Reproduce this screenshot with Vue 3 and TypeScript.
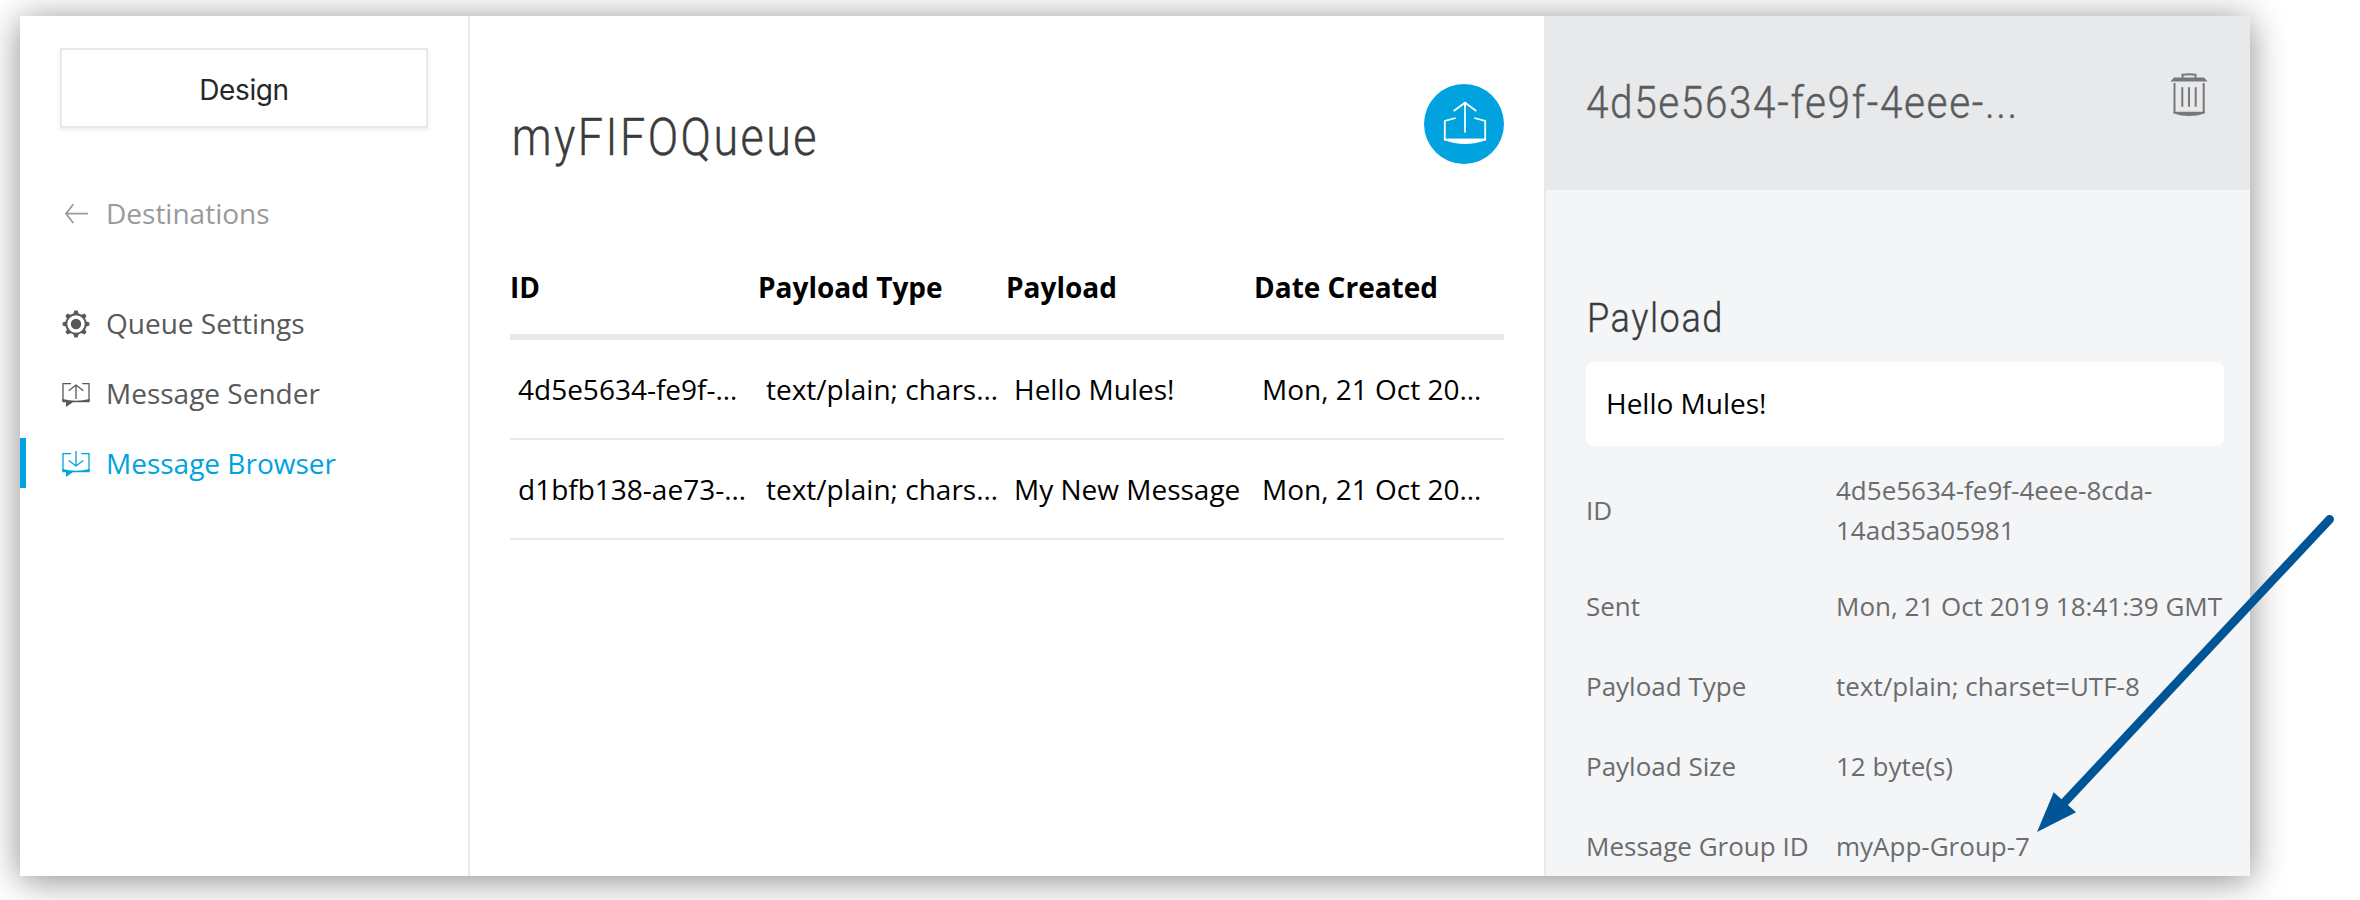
<script setup lang="ts">
interface Message {
  id: string
  type: string
  payload: string
  created: string
}

interface Detail {
  label: string
  lines: string[]
}

const columns: string[] = ['ID', 'Payload Type', 'Payload', 'Date Created']

const messages: Message[] = [
  { id: '4d5e5634-fe9f-…', type: 'text/plain; chars…', payload: 'Hello Mules!', created: 'Mon, 21 Oct 20…' },
  { id: 'd1bfb138-ae73-…', type: 'text/plain; chars…', payload: 'My New Message', created: 'Mon, 21 Oct 20…' },
]

const details: Detail[] = [
  { label: 'ID', lines: ['4d5e5634-fe9f-4eee-8cda-', '14ad35a05981'] },
  { label: 'Sent', lines: ['Mon, 21 Oct 2019 18:41:39 GMT'] },
  { label: 'Payload Type', lines: ['text/plain; charset=UTF-8'] },
  { label: 'Payload Size', lines: ['12 byte(s)'] },
  { label: 'Message Group ID', lines: ['myApp-Group-7'] },
]

const teeth: number[] = [0, 45, 90, 135, 180, 225, 270, 315]
</script>

<template>
  <div class="page">
    <div class="window">
      <aside class="sidebar">
        <button class="env">Design</button>
        <a class="nav-item back">
          <svg class="nav-icon" viewBox="0 0 28 28" fill="none" stroke="currentColor" stroke-width="1.8">
            <path d="M26 14.7H4M11.3 5.3L4 14.7l7.3 9.3" />
          </svg>
          <span>Destinations</span>
        </a>
        <nav class="nav">
          <a class="nav-item">
            <svg class="nav-icon" viewBox="0 0 28 28" fill="none" stroke="currentColor">
              <circle cx="14" cy="15" r="9.7" stroke-width="2" />
              <circle cx="14" cy="15" r="5.2" fill="currentColor" stroke="none" />
              <path
                v-for="angle in teeth"
                :key="angle"
                d="M11.2 5.6L12.4 1.6H15.6L16.8 5.6z"
                fill="currentColor"
                stroke="none"
                :transform="`rotate(${angle} 14 15)`"
              />
            </svg>
            <span>Queue Settings</span>
          </a>
          <a class="nav-item">
            <svg class="nav-icon" viewBox="0 0 28 28" fill="none" stroke="currentColor" stroke-width="1.3">
              <path d="M9 4.6H1V22M20.3 4.6H27V22" />
              <path d="M.4 20Q14 23.6 27.6 20V23.3H10.8L4 28V23.3H.4z" fill="currentColor" stroke="none" />
              <path d="M14 6V20M6.7 11.7L14 6l7.3 5.7" />
            </svg>
            <span>Message Sender</span>
          </a>
          <a class="nav-item active">
            <svg class="nav-icon" viewBox="0 0 28 28" fill="none" stroke="currentColor" stroke-width="1.3">
              <path d="M9 4.6H1V22M19.3 4.6H27V22" />
              <path d="M.4 20Q14 23.6 27.6 20V23.3H10.8L4 28V23.3H.4z" fill="currentColor" stroke="none" />
              <path d="M14 2V16.8M6.7 11.5L14 17l7.3-5.5" />
            </svg>
            <span>Message Browser</span>
          </a>
        </nav>
      </aside>

      <main class="main">
        <header class="main-head">
          <h1><span class="din queue-name">myFIFOQueue</span></h1>
          <button class="send">
            <svg viewBox="0 0 80 80" fill="none" stroke="#fff" stroke-width="1.8">
              <path d="M41 18.8V48.6M29.7 27L41 18.7 52.3 27" />
              <path d="M31.7 34L20.8 37V55.6H61.2V37L50.3 34" />
              <path d="M20 54.8H62V56Q52 60 41 60T20 56z" fill="#fff" stroke="none" />
            </svg>
          </button>
        </header>
        <div class="table">
          <div class="row head">
            <div v-for="column in columns" :key="column">{{ column }}</div>
          </div>
          <div v-for="message in messages" :key="message.id" class="row">
            <div>{{ message.id }}</div>
            <div>{{ message.type }}</div>
            <div>{{ message.payload }}</div>
            <div>{{ message.created }}</div>
          </div>
        </div>
      </main>

      <section class="panel">
        <header class="panel-head">
          <h2><span class="din message-name">4d5e5634-fe9f-4eee-...</span></h2>
          <svg class="trash" viewBox="0 0 38 44" fill="none" stroke="currentColor" stroke-width="2">
            <path d="M12.5 5V1.7Q19 .6 25.5 1.7V5" />
            <path d="M.4 8.4L4 4.6H34L37.6 8.4z" fill="currentColor" stroke="none" />
            <path d="M4.5 10V40M33.7 10V40M12.3 14.3V33.7M19 14.3V33.7M25.7 14.3V33.7" />
            <path d="M3.5 38.8H34.7V40.5Q27 43 19 43T3.5 40.5z" fill="currentColor" stroke="none" />
          </svg>
        </header>
        <div class="panel-body">
          <h3><span class="din payload-name">Payload</span></h3>
          <div class="payload">Hello Mules!</div>
          <dl class="details">
            <div v-for="detail in details" :key="detail.label" class="detail">
              <dt>{{ detail.label }}</dt>
              <dd>
                <div v-for="line in detail.lines" :key="line">{{ line }}</div>
              </dd>
            </div>
          </dl>
        </div>
      </section>
    </div>

    <svg class="pointer" viewBox="0 0 2360 900">
      <path d="M2329.7 519.3L2062 805" stroke="#005596" stroke-width="8.6" stroke-linecap="round" />
      <path d="M2037 832L2053.7 792.3L2076 812.3z" fill="#005596" />
    </svg>
  </div>
</template>

<style>
body {
  margin: 0;
  background: #fff;
}
</style>

<style scoped>
.page {
  position: relative;
  box-sizing: border-box;
  width: 2360px;
  height: 900px;
  padding: 16px 0 0 20px;
  overflow: hidden;
  background: #fff;
  font-family: "Open Sans", "Noto Sans", sans-serif;
  font-size: 28px;
  color: #000;
}
.window {
  display: flex;
  width: 2230px;
  height: 860px;
  background: #fff;
  box-shadow: 0 4px 34px rgba(0, 0, 0, 0.46);
}
.sidebar {
  box-sizing: border-box;
  width: 450px;
  padding-top: 32px;
  border-right: 2px solid #e8e9ea;
}
.env {
  display: block;
  box-sizing: border-box;
  width: 368px;
  height: 80px;
  margin: 0 0 60px 40px;
  padding: 3px 0 0;
  border: 2px solid #e8e9ea;
  background: #fff;
  box-shadow: 0 2px 4px rgba(0, 0, 0, 0.08);
  font: 400 28px Inter, sans-serif;
  letter-spacing: -0.4px;
  color: #262728;
}
.nav-item {
  display: flex;
  align-items: center;
  box-sizing: border-box;
  height: 50px;
  padding-left: 42px;
  color: #58595a;
  white-space: nowrap;
}
.nav-icon {
  width: 28px;
  height: 28px;
  margin-right: 16px;
  overflow: visible;
}
.back {
  margin-bottom: 60px;
  color: #989a9b;
}
.nav {
  display: flex;
  flex-direction: column;
  gap: 20px;
}
.active {
  padding-left: 36px;
  border-left: 6px solid #00a2df;
  color: #00a2df;
}
.main {
  box-sizing: border-box;
  width: 1074px;
  padding: 68px 40px 0;
}
.main-head {
  display: flex;
  justify-content: space-between;
  height: 144px;
}
h1,
h2,
h3,
dl,
dd {
  margin: 0;
}
h1,
h2,
h3 {
  font-family: Roboto, sans-serif;
  font-weight: 300;
  white-space: nowrap;
}
/* Narrow, widely tracked lettering for the headings */
.din {
  display: inline-block;
  transform-origin: 0 50%;
  -webkit-text-stroke: 0.4px currentColor;
}
.queue-name {
  padding-left: 2px;
  letter-spacing: 2.8px;
  transform: scaleX(0.88);
}
.message-name {
  letter-spacing: 1.8px;
  transform: scaleX(0.9);
}
.payload-name {
  padding-left: 1px;
  letter-spacing: 1.8px;
  transform: scaleX(0.88);
}
h1 {
  padding-top: 24px;
  font-size: 51px;
  line-height: 60px;
  color: #3a3b3c;
}
.send {
  width: 80px;
  height: 80px;
  padding: 0;
  border: 0;
  border-radius: 50%;
  background: #00a2df;
}
.send svg {
  display: block;
  width: 80px;
  height: 80px;
}
.row {
  display: grid;
  grid-template-columns: repeat(4, 248px);
  align-items: center;
  box-sizing: border-box;
  height: 100px;
  border-bottom: 2px solid #e8e9ea;
  white-space: nowrap;
}
.row > div {
  padding-left: 8px;
}
.head {
  height: 112px;
  padding-top: 12px;
  border-bottom: 6px solid #e8e9ea;
  font-weight: 700;
}
.head > div {
  padding-left: 0;
}
.panel {
  box-sizing: border-box;
  width: 706px;
  border-left: 2px solid #e8e9ea;
  background: #f4f5f7;
}
.panel-head {
  display: flex;
  justify-content: space-between;
  box-sizing: border-box;
  height: 174px;
  padding: 57px 42px 0 40px;
  background: #e8e9ea;
}
h2 {
  width: 440px;
  font-size: 45px;
  line-height: 60px;
  color: #5a5b5c;
}
.trash {
  width: 38px;
  height: 44px;
  color: #77787a;
}
.panel-body {
  padding: 98px 26px 0 40px;
}
h3 {
  height: 74px;
  font-size: 41px;
  line-height: 60px;
  color: #3a3b3c;
}
.payload {
  display: flex;
  align-items: center;
  box-sizing: border-box;
  height: 84px;
  margin-bottom: 4px;
  padding: 0 0 2px 20px;
  border-radius: 8px;
  background: #fff;
}
.details {
  font-size: 26px;
  line-height: 40px;
  color: #6b6c6d;
}
.detail {
  display: flex;
  align-items: center;
  padding: 20px 0;
  white-space: nowrap;
}
.detail:first-child {
  padding-bottom: 16px;
}
dt {
  width: 250px;
}
.pointer {
  position: absolute;
  top: 0;
  left: 0;
  width: 2360px;
  height: 900px;
}
</style>
